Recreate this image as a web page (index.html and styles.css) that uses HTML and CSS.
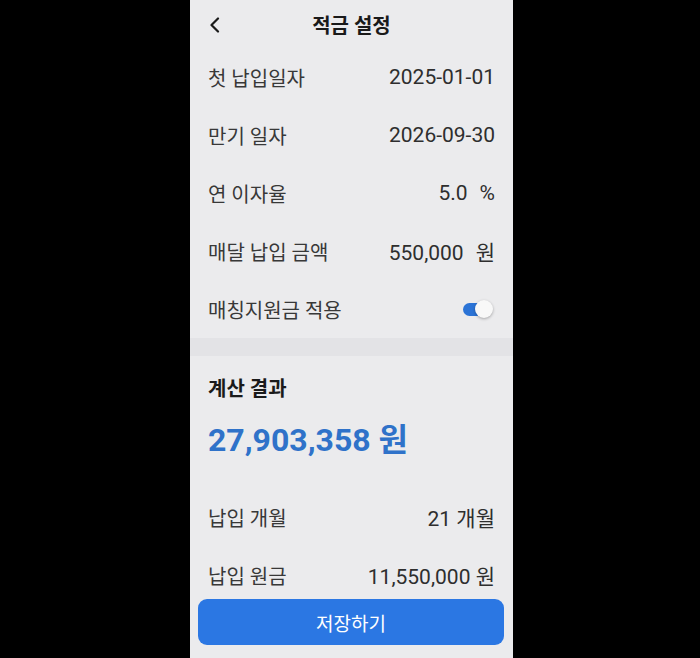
FILE: index.html
```html
<!DOCTYPE html>
<html lang="ko">
<head>
    <meta charset="UTF-8">
    <meta name="viewport" content="width=device-width, initial-scale=1.0">
    <title>적금 설정</title>
    <link rel="stylesheet" href="styles.css">
</head>
<body>
    <div class="screen">
        <div class="scroll">
            <header class="topbar">
                <button class="back" type="button" aria-label="뒤로">
                    <svg width="14" height="16" viewBox="0 0 14 16">
                        <path d="M10 1.5 L3.5 8 L10 14.5" fill="none" stroke="#1a1a1a" stroke-width="2.2" stroke-linecap="round" stroke-linejoin="round"/>
                    </svg>
                </button>
                <h1>적금 설정</h1>
            </header>

            <section class="settings">
                <div class="row">
                    <span class="label">첫 납입일자</span>
                    <span class="value">2025-01-01</span>
                </div>
                <div class="row">
                    <span class="label">만기 일자</span>
                    <span class="value">2026-09-30</span>
                </div>
                <div class="row">
                    <span class="label">연 이자율</span>
                    <span class="value">5.0<span class="unit">%</span></span>
                </div>
                <div class="row">
                    <span class="label">매달 납입 금액</span>
                    <span class="value">550,000<span class="unit">원</span></span>
                </div>
                <div class="row">
                    <span class="label">매칭지원금 적용</span>
                    <span class="switch on"><span class="knob"></span></span>
                </div>
            </section>

            <div class="divider"></div>

            <section class="result">
                <h2>계산 결과</h2>
                <div class="total">27,903,358 원</div>
                <div class="row">
                    <span class="label">납입 개월</span>
                    <span class="value">21 개월</span>
                </div>
                <div class="row">
                    <span class="label">납입 원금</span>
                    <span class="value">11,550,000 원</span>
                </div>
            </section>
        </div>

        <footer class="actions">
            <button class="save" type="button">저장하기</button>
        </footer>
    </div>
</body>
</html>
```

FILE: styles.css
```css
html, body {
    margin: 0;
    padding: 0;
    height: 100%;
}
body {
    background: #000000;
    font-family: Roboto, "Noto Sans CJK KR", sans-serif;
    overflow: hidden;
}
.screen {
    width: 323px;
    height: 658px;
    margin-left: 190px;
    background: #ebebed;
    display: flex;
    flex-direction: column;
}
.scroll {
    flex: 1;
    overflow: hidden;
}
/* Top bar */
.topbar {
    height: 48px;
    display: flex;
    align-items: center;
    justify-content: center;
    position: relative;
}
.topbar h1 {
    margin: 0;
    font-size: 20px;
    font-weight: 700;
    color: #1a1a1a;
}
.back {
    position: absolute;
    left: 18px;
    top: 17px;
    padding: 0;
    border: none;
    background: none;
    width: 14px;
    height: 16px;
    display: flex;
}
/* Rows */
.row {
    height: 58px;
    padding: 0 18px;
    display: flex;
    align-items: center;
    justify-content: space-between;
    font-size: 20px;
    color: #383838;
}
.value {
    font-size: 21px;
    color: #2e2e2e;
}
.unit {
    margin-left: 12px;
}
/* Toggle */
.switch {
    position: relative;
    width: 30px;
    height: 18px;
    margin-right: 2px;
    display: flex;
    align-items: center;
}
.switch::before {
    content: "";
    display: block;
    width: 26px;
    height: 13px;
    border-radius: 7px;
    background: #dcdcdc;
}
.switch.on::before {
    background: #2b73d6;
}
.knob {
    position: absolute;
    right: 0;
    top: 0;
    width: 18px;
    height: 18px;
    border-radius: 50%;
    background: #f8f8f8;
    box-shadow: 0 1px 3px rgba(0, 0, 0, 0.3);
}
.divider {
    height: 18px;
    background: #e3e3e6;
}
/* Result */
.result {
    padding-top: 21px;
}
.result h2 {
    margin: 0 18px;
    height: 24px;
    line-height: 24px;
    font-size: 20px;
    font-weight: 700;
    color: #1a1a1a;
}
.total {
    margin: 19px 18px 28px;
    height: 40px;
    line-height: 40px;
    font-size: 32px;
    font-weight: 700;
    color: #2f72c9;
}
/* Bottom button */
.actions {
    padding: 0 9px 13px 8px;
}
.save {
    width: 100%;
    height: 46px;
    border: none;
    border-radius: 9px;
    background: #2b77e3;
    color: #ffffff;
    font-family: Roboto, "Noto Sans CJK KR", sans-serif;
    font-size: 19px;
    font-weight: 400;
}
```
